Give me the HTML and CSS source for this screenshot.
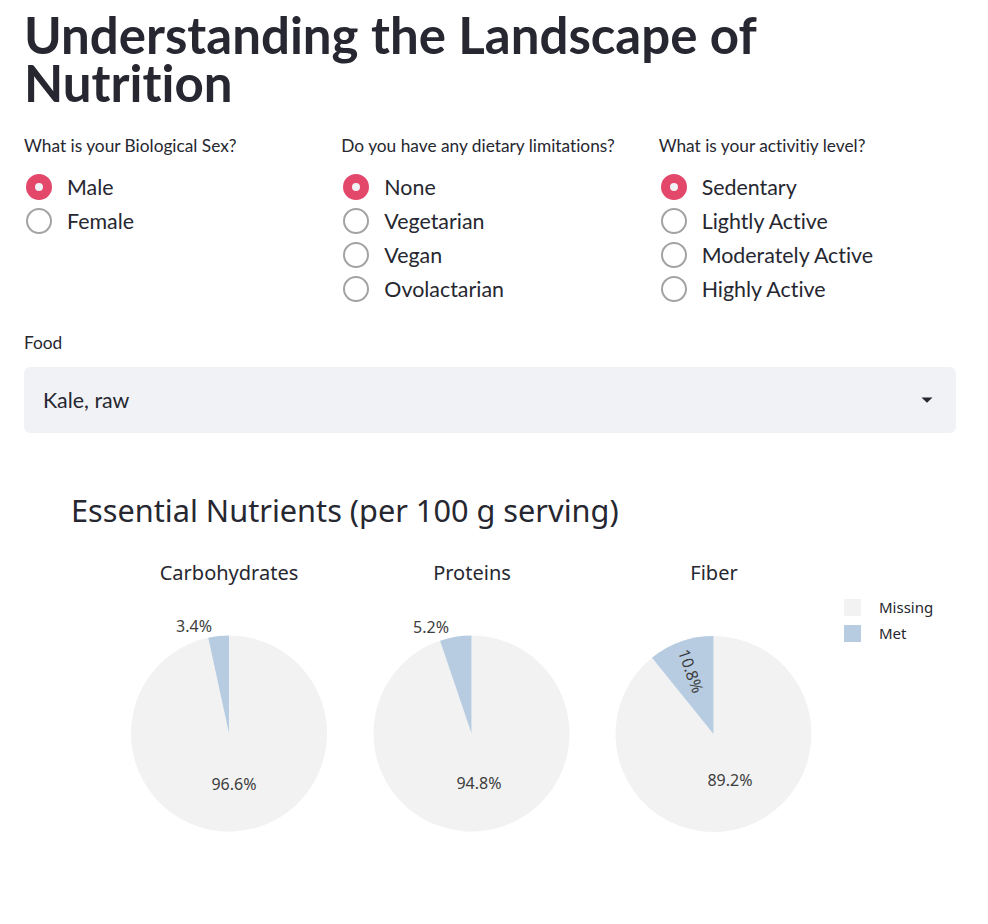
FILE: index.html
```html
<!DOCTYPE html>
<html lang="en">
<head>
<meta charset="utf-8">
<title>Understanding the Landscape of Nutrition</title>
<link rel="stylesheet" href="styles.css">
</head>
<body>
<main class="main">
  <h1 class="title">Understanding the Landscape of Nutrition</h1>

  <div class="columns">
    <div class="col">
      <div class="label">What is your Biological Sex?</div>
      <div class="radio-group">
        <div class="radio selected"><span class="dot"></span><span class="rtext">Male</span></div>
        <div class="radio"><span class="dot"></span><span class="rtext">Female</span></div>
      </div>
    </div>
    <div class="col">
      <div class="label">Do you have any dietary limitations?</div>
      <div class="radio-group">
        <div class="radio selected"><span class="dot"></span><span class="rtext">None</span></div>
        <div class="radio"><span class="dot"></span><span class="rtext">Vegetarian</span></div>
        <div class="radio"><span class="dot"></span><span class="rtext">Vegan</span></div>
        <div class="radio"><span class="dot"></span><span class="rtext">Ovolactarian</span></div>
      </div>
    </div>
    <div class="col">
      <div class="label">What is your activitiy level?</div>
      <div class="radio-group">
        <div class="radio selected"><span class="dot"></span><span class="rtext">Sedentary</span></div>
        <div class="radio"><span class="dot"></span><span class="rtext">Lightly Active</span></div>
        <div class="radio"><span class="dot"></span><span class="rtext">Moderately Active</span></div>
        <div class="radio"><span class="dot"></span><span class="rtext">Highly Active</span></div>
      </div>
    </div>
  </div>

  <div class="field">
    <div class="label">Food</div>
    <div class="select">
      <span class="select-value">Kale, raw</span>
      <svg class="caret" width="12" height="6" viewBox="0 0 12 6"><path d="M0.5 0.5 H11.5 L6 5.8 Z" fill="#262730"/></svg>
    </div>
  </div>

  <svg class="chart" width="932" height="420" viewBox="24 468 932 420">
    <text class="chart-title" x="71" y="523">Essential Nutrients (per 100 g serving)</text>

    <text class="sub-title" x="229" y="581" text-anchor="middle">Carbohydrates</text>
    <text class="sub-title" x="472" y="581" text-anchor="middle">Proteins</text>
    <text class="sub-title" x="714" y="581" text-anchor="middle">Fiber</text>

    <!-- Carbohydrates -->
    <path class="missing" d="M229 734.5 L208.22 638.73 A98 98 0 1 0 229 636.5 Z"/>
    <path class="met" d="M229 734.5 L229 636.5 A98 98 0 0 0 208.22 638.73 Z"/>
    <text class="pct" x="194" y="633" text-anchor="middle">3.4%</text>
    <text class="pct" x="234" y="791" text-anchor="middle">96.6%</text>

    <!-- Proteins -->
    <path class="missing" d="M471.5 734.5 L440.04 641.69 A98 98 0 1 0 471.5 636.5 Z"/>
    <path class="met" d="M471.5 734.5 L471.5 636.5 A98 98 0 0 0 440.04 641.69 Z"/>
    <text class="pct" x="431" y="634" text-anchor="middle">5.2%</text>
    <text class="pct" x="479" y="790" text-anchor="middle">94.8%</text>

    <!-- Fiber -->
    <path class="missing" d="M713.5 735 L651.99 658.71 A98 98 0 1 0 713.5 637 Z"/>
    <path class="met" d="M713.5 735 L713.5 637 A98 98 0 0 0 651.99 658.71 Z"/>
    <text class="pct" x="0" y="0" text-anchor="middle" dominant-baseline="central" transform="translate(691 672) rotate(70.6)">10.8%</text>
    <text class="pct" x="730" y="787" text-anchor="middle">89.2%</text>

    <!-- Legend -->
    <rect class="missing" x="844" y="600" width="17" height="17"/>
    <text class="legend" x="879" y="614">Missing</text>
    <rect class="met" x="844" y="626" width="17" height="17"/>
    <text class="legend" x="879" y="640">Met</text>
  </svg>
</main>
</body>
</html>
```

FILE: styles.css
```css
* { box-sizing: border-box; }

body {
  margin: 0;
  background: #ffffff;
  color: #262730;
  font-family: "Lato", "Noto Sans", sans-serif;
  font-variant-ligatures: none;
}

.main {
  width: 980px;
  padding: 0 24px;
}

.title {
  margin: 0;
  padding-top: 11px;
  font-size: 51px;
  line-height: 48px;
  font-weight: 700;
  color: #262730;
}

.columns {
  display: grid;
  grid-template-columns: repeat(3, 1fr);
  column-gap: 20px;
  margin-top: 27px;
}

.label {
  font-size: 17.3px;
  line-height: 24px;
  color: #262730;
  white-space: nowrap;
}

.radio-group {
  display: flex;
  flex-direction: column;
  margin-top: 12px;
}

.radio {
  display: flex;
  align-items: center;
  height: 34px;
  padding-left: 2px;
}

.dot {
  width: 26px;
  height: 26px;
  border-radius: 50%;
  border: 2px solid #a3a3a3;
  flex: none;
}

.radio.selected .dot {
  border: 9px solid #e3486a;
  background: #f0f2f6;
}

.rtext {
  margin-left: 15px;
  font-size: 21.4px;
  color: #262730;
}

.field {
  margin-top: 25px;
}

.select {
  margin-top: 12px;
  height: 66px;
  background: #f0f2f6;
  border-radius: 6px;
  display: flex;
  align-items: center;
  justify-content: space-between;
  padding: 0 23px 0 19px;
}

.select-value {
  font-size: 21.4px;
  color: #262730;
}

.caret {
  display: block;
}

.chart {
  display: block;
  margin-top: 34px;
  font-family: "Noto Sans", "Lato", sans-serif;
}

.chart-title {
  font-size: 30.7px;
  fill: #262730;
}

.sub-title {
  font-size: 20px;
  fill: #262730;
}

.pct {
  font-size: 16px;
  fill: #3d3d3d;
}

.legend {
  font-size: 15px;
  fill: #262730;
}

.missing { fill: #f2f2f2; }
.met { fill: #b8cce1; }
```
